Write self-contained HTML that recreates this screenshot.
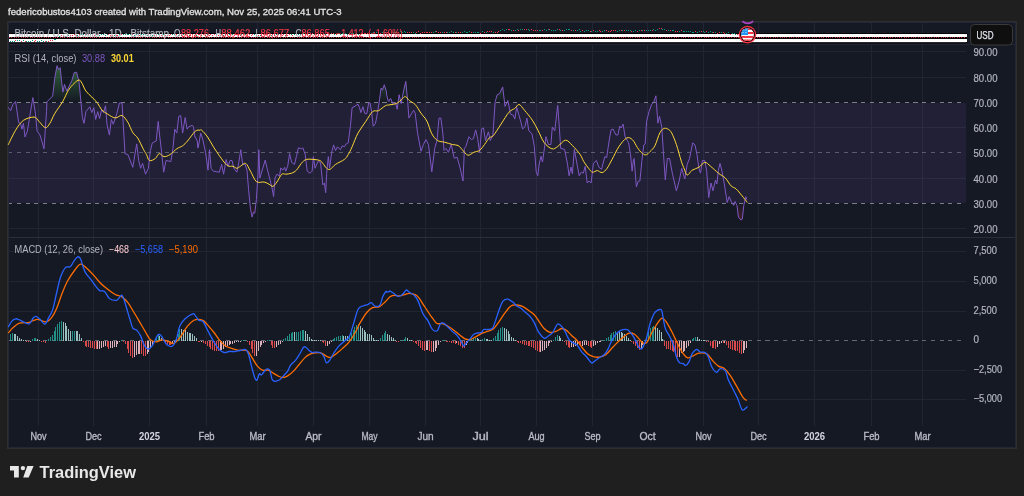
<!DOCTYPE html>
<html><head><meta charset="utf-8"><style>
html,body{margin:0;padding:0}
body{width:1024px;height:496px;background:#1f1f1f;position:relative;overflow:hidden;font-family:"Liberation Sans",sans-serif}
.t{position:absolute;white-space:nowrap;line-height:1;will-change:transform}
</style></head><body>
<svg width="1024" height="496" style="position:absolute;left:0;top:0;will-change:transform" font-family="Liberation Sans, sans-serif">
<defs><linearGradient id="gup" gradientUnits="userSpaceOnUse" x1="0" y1="26" x2="0" y2="102"><stop offset="0" stop-color="#4caf50" stop-opacity="1"/><stop offset="1" stop-color="#4caf50" stop-opacity="0"/></linearGradient><linearGradient id="gdn" gradientUnits="userSpaceOnUse" x1="0" y1="203" x2="0" y2="279"><stop offset="0" stop-color="#f23645" stop-opacity="0"/><stop offset="1" stop-color="#f23645" stop-opacity="1"/></linearGradient><clipPath id="plot"><rect x="9" y="23" width="957" height="403"/></clipPath><clipPath id="up70"><rect x="9" y="23" width="958" height="79"/></clipPath><clipPath id="dn30"><rect x="9" y="204" width="958" height="33"/></clipPath></defs>
<rect x="7" y="21" width="1010" height="428" fill="#2e2e2e"/>
<rect x="8" y="22" width="1008" height="426" fill="#232634"/>
<rect x="9" y="23" width="1006" height="424" fill="#151924"/>
<path d="M38.5 23V426 M93.5 23V426 M149.5 23V426 M206.5 23V426 M257.5 23V426 M313.5 23V426 M369.5 23V426 M425.5 23V426 M480.5 23V426 M536.5 23V426 M592.5 23V426 M647.5 23V426 M703.5 23V426 M758.5 23V426 M814.5 23V426 M871.5 23V426 M922.5 23V426 M9 51.5H966 M9 77.5H966 M9 127.5H966 M9 178.5H966 M9 228.5H966 M9 251.5H966 M9 281.5H966 M9 311.5H966 M9 370.5H966 M9 399.5H966" stroke="#212533" stroke-width="1" fill="none" shape-rendering="crispEdges"/>
<rect x="9" y="103" width="957" height="100" fill="#7e57c2" fill-opacity="0.12"/>
<path d="M9 237.5H1015" stroke="#2a2e39" stroke-width="1" shape-rendering="crispEdges"/>
<path d="M9 102.5H966" stroke="#b2b5be" stroke-opacity="0.65" stroke-width="1" stroke-dasharray="4.1 4.605" stroke-dashoffset="0.9" shape-rendering="crispEdges"/>
<path d="M9 152.5H966" stroke="#b2b5be" stroke-opacity="0.4" stroke-width="1" stroke-dasharray="4.1 4.605" stroke-dashoffset="0.9" shape-rendering="crispEdges"/>
<path d="M9 203.5H966" stroke="#b2b5be" stroke-opacity="0.65" stroke-width="1" stroke-dasharray="4.1 4.605" stroke-dashoffset="0.9" shape-rendering="crispEdges"/>
<path d="M9 340.5H966" stroke="#b2b5be" stroke-opacity="0.5" stroke-width="1" stroke-dasharray="4.1 4.605" stroke-dashoffset="0.9" shape-rendering="crispEdges"/>
<polygon points="8.2,102.5 8.2,107.3 10.7,110.7 12.7,104.8 15.6,101.5 18.6,122.4 20.5,123.4 21.9,129.2 23.4,123.4 25.0,137.0 27.3,131.2 29.3,119.5 32.8,97.6 35.2,111.6 37.1,131.2 40.0,135.0 44.0,148.8 46.5,111.6 46.9,101.9 52.7,96.0 54.7,78.4 57.0,65.7 58.6,69.6 60.2,67.7 61.7,82.3 62.9,92.1 64.5,84.3 66.8,91.1 71.9,80.4 74.2,72.6 76.6,72.2 79.1,82.3 81.1,103.8 82.4,117.5 84.0,123.4 85.9,111.6 89.8,106.8 91.8,112.6 93.8,107.7 95.7,119.5 97.7,111.6 99.6,118.5 101.6,109.7 103.5,112.6 105.5,105.8 107.0,124.3 109.4,135.1 111.3,119.5 113.3,124.3 116.8,113.6 119.5,102.9 122.0,102.9 124.0,137.0 125.0,153.6 127.9,154.6 132.8,167.3 136.7,143.9 138.7,160.5 140.6,168.3 142.6,163.4 145.5,174.2 148.4,168.3 150.4,150.7 152.3,142.9 156.2,141.0 158.2,121.4 159.8,137.0 161.0,146.8 163.7,172.2 166.0,160.5 170.9,161.5 172.9,148.8 174.8,129.2 176.8,133.1 178.7,116.5 180.7,115.5 182.6,133.1 185.2,117.5 187.1,129.2 189.0,126.3 190.0,126.3 192.0,125.3 193.4,126.3 193.5,127.3 194.9,137.0 195.3,137.0 197.3,141.0 197.8,147.8 198.2,147.8 200.7,133.1 202.7,139.0 205.6,152.7 208.0,170.2 209.5,149.7 211.1,168.3 213.4,171.2 219.3,172.2 221.6,164.4 223.6,174.2 226.1,159.5 228.1,166.3 230.0,160.5 232.0,160.5 233.9,168.3 236.9,172.2 238.8,162.4 240.8,149.7 242.7,164.4 245.1,164.4 247.0,170.2 248.6,189.8 250.5,209.3 252.1,217.1 253.5,212.2 254.8,213.2 256.4,199.5 258.0,174.2 258.8,149.7 259.9,178.0 261.3,173.2 265.2,160.1 267.1,168.3 269.1,176.1 272.0,187.8 273.6,196.6 275.0,178.0 276.9,174.2 279.5,176.1 280.8,167.9 282.8,170.2 284.7,167.3 285.7,171.2 287.7,166.3 289.6,153.6 291.6,162.4 294.5,164.4 296.4,156.6 298.4,147.8 301.3,148.8 302.9,147.8 305.2,154.6 307.2,171.2 310.1,173.2 312.1,171.2 313.4,156.6 315.0,168.3 317.9,161.5 320.5,162.4 322.8,184.9 324.4,183.0 325.7,192.7 326.7,173.2 328.3,156.6 329.6,168.3 331.6,152.7 333.6,144.9 335.5,150.7 337.5,146.8 340.4,149.7 342.3,145.8 344.3,146.8 346.2,143.9 348.2,142.9 350.5,125.3 352.1,107.7 355.0,106.2 358.0,104.2 359.5,107.7 360.9,112.6 362.9,106.8 364.8,113.6 366.8,113.6 368.7,102.9 370.1,102.9 371.6,111.6 373.2,126.3 375.5,123.4 377.5,112.6 379.5,99.9 381.0,88.2 382.0,88.8 382.4,90.2 384.3,84.7 384.3,84.9 386.3,91.1 386.8,95.7 388.2,100.9 388.8,101.5 390.0,98.9 390.7,98.6 392.7,103.5 395.6,102.5 397.2,109.3 399.1,94.7 401.1,103.5 403.8,89.8 405.8,81.4 407.7,101.5 408.9,118.1 411.2,114.2 413.6,110.3 415.2,113.2 417.5,132.8 421.0,151.3 423.4,144.5 425.9,139.6 428.4,144.5 431.8,171.8 434.7,148.4 437.0,140.6 439.0,118.1 440.9,118.1 442.9,133.8 444.0,150.4 446.0,148.4 448.4,152.3 451.3,144.5 454.2,158.2 457.1,157.2 460.1,167.9 463.0,181.0 464.4,148.4 465.9,146.5 468.9,136.7 471.4,139.6 473.4,138.6 475.7,129.9 477.7,138.6 479.6,152.3 481.6,128.9 483.5,127.9 485.5,140.6 488.4,131.8 490.3,140.6 492.9,134.7 495.2,101.5 497.2,94.7 499.5,93.7 502.7,86.9 505.0,106.4 507.9,100.6 510.5,114.2 513.2,115.2 514.8,119.1 516.7,107.4 518.7,114.2 520.6,121.1 522.6,128.9 524.9,126.9 526.9,118.1 528.8,130.8 532.0,133.8 534.3,146.5 536.2,171.8 537.8,175.8 539.2,164.0 541.1,156.2 542.5,162.1 546.0,136.7 548.4,144.5 550.9,144.5 552.3,126.9 554.8,130.8 557.7,105.4 559.3,126.9 560.7,148.4 564.6,149.4 567.5,164.0 569.1,175.8 571.0,167.0 572.4,173.8 574.3,149.4 576.3,160.1 579.2,175.8 581.3,172.2 583.3,173.2 585.2,166.3 587.2,183.0 589.1,181.0 591.1,183.0 593.4,163.4 596.4,160.5 598.9,167.3 601.6,169.3 604.8,156.6 606.7,157.6 608.1,147.8 609.1,141.0 611.0,130.0 613.0,129.0 615.9,134.9 617.9,134.9 619.8,126.1 621.2,128.0 623.1,124.1 625.1,136.8 628.6,142.7 630.5,154.4 632.1,171.2 633.5,159.3 634.1,158.5 636.4,186.9 638.4,181.0 639.9,181.0 641.9,160.5 643.8,144.9 645.2,143.9 646.6,121.2 649.1,111.4 651.6,104.6 653.6,102.6 655.9,95.8 657.9,123.2 659.5,116.3 661.8,127.1 663.4,152.5 665.3,180.0 667.3,158.5 669.6,158.5 672.5,174.2 676.4,190.8 679.4,180.0 681.7,168.3 684.8,179.0 687.2,164.4 689.5,158.5 691.1,150.7 692.7,142.9 695.0,144.9 697.0,154.6 698.9,168.3 700.5,173.2 702.4,160.5 704.8,160.5 706.7,171.2 708.7,197.6 711.0,183.0 713.0,190.8 715.5,180.0 716.9,183.9 718.4,170.2 720.0,163.4 722.0,171.2 724.3,183.9 727.2,202.5 729.2,196.6 731.7,202.5 733.7,205.4 735.0,201.5 737.0,205.4 738.4,217.1 740.9,220.0 742.3,219.1 743.8,205.4 745.8,196.6 746.8,199.5 746.8,102.5" fill="url(#gup)" clip-path="url(#up70)"/>
<polygon points="8.2,203.5 8.2,107.3 10.7,110.7 12.7,104.8 15.6,101.5 18.6,122.4 20.5,123.4 21.9,129.2 23.4,123.4 25.0,137.0 27.3,131.2 29.3,119.5 32.8,97.6 35.2,111.6 37.1,131.2 40.0,135.0 44.0,148.8 46.5,111.6 46.9,101.9 52.7,96.0 54.7,78.4 57.0,65.7 58.6,69.6 60.2,67.7 61.7,82.3 62.9,92.1 64.5,84.3 66.8,91.1 71.9,80.4 74.2,72.6 76.6,72.2 79.1,82.3 81.1,103.8 82.4,117.5 84.0,123.4 85.9,111.6 89.8,106.8 91.8,112.6 93.8,107.7 95.7,119.5 97.7,111.6 99.6,118.5 101.6,109.7 103.5,112.6 105.5,105.8 107.0,124.3 109.4,135.1 111.3,119.5 113.3,124.3 116.8,113.6 119.5,102.9 122.0,102.9 124.0,137.0 125.0,153.6 127.9,154.6 132.8,167.3 136.7,143.9 138.7,160.5 140.6,168.3 142.6,163.4 145.5,174.2 148.4,168.3 150.4,150.7 152.3,142.9 156.2,141.0 158.2,121.4 159.8,137.0 161.0,146.8 163.7,172.2 166.0,160.5 170.9,161.5 172.9,148.8 174.8,129.2 176.8,133.1 178.7,116.5 180.7,115.5 182.6,133.1 185.2,117.5 187.1,129.2 189.0,126.3 190.0,126.3 192.0,125.3 193.4,126.3 193.5,127.3 194.9,137.0 195.3,137.0 197.3,141.0 197.8,147.8 198.2,147.8 200.7,133.1 202.7,139.0 205.6,152.7 208.0,170.2 209.5,149.7 211.1,168.3 213.4,171.2 219.3,172.2 221.6,164.4 223.6,174.2 226.1,159.5 228.1,166.3 230.0,160.5 232.0,160.5 233.9,168.3 236.9,172.2 238.8,162.4 240.8,149.7 242.7,164.4 245.1,164.4 247.0,170.2 248.6,189.8 250.5,209.3 252.1,217.1 253.5,212.2 254.8,213.2 256.4,199.5 258.0,174.2 258.8,149.7 259.9,178.0 261.3,173.2 265.2,160.1 267.1,168.3 269.1,176.1 272.0,187.8 273.6,196.6 275.0,178.0 276.9,174.2 279.5,176.1 280.8,167.9 282.8,170.2 284.7,167.3 285.7,171.2 287.7,166.3 289.6,153.6 291.6,162.4 294.5,164.4 296.4,156.6 298.4,147.8 301.3,148.8 302.9,147.8 305.2,154.6 307.2,171.2 310.1,173.2 312.1,171.2 313.4,156.6 315.0,168.3 317.9,161.5 320.5,162.4 322.8,184.9 324.4,183.0 325.7,192.7 326.7,173.2 328.3,156.6 329.6,168.3 331.6,152.7 333.6,144.9 335.5,150.7 337.5,146.8 340.4,149.7 342.3,145.8 344.3,146.8 346.2,143.9 348.2,142.9 350.5,125.3 352.1,107.7 355.0,106.2 358.0,104.2 359.5,107.7 360.9,112.6 362.9,106.8 364.8,113.6 366.8,113.6 368.7,102.9 370.1,102.9 371.6,111.6 373.2,126.3 375.5,123.4 377.5,112.6 379.5,99.9 381.0,88.2 382.0,88.8 382.4,90.2 384.3,84.7 384.3,84.9 386.3,91.1 386.8,95.7 388.2,100.9 388.8,101.5 390.0,98.9 390.7,98.6 392.7,103.5 395.6,102.5 397.2,109.3 399.1,94.7 401.1,103.5 403.8,89.8 405.8,81.4 407.7,101.5 408.9,118.1 411.2,114.2 413.6,110.3 415.2,113.2 417.5,132.8 421.0,151.3 423.4,144.5 425.9,139.6 428.4,144.5 431.8,171.8 434.7,148.4 437.0,140.6 439.0,118.1 440.9,118.1 442.9,133.8 444.0,150.4 446.0,148.4 448.4,152.3 451.3,144.5 454.2,158.2 457.1,157.2 460.1,167.9 463.0,181.0 464.4,148.4 465.9,146.5 468.9,136.7 471.4,139.6 473.4,138.6 475.7,129.9 477.7,138.6 479.6,152.3 481.6,128.9 483.5,127.9 485.5,140.6 488.4,131.8 490.3,140.6 492.9,134.7 495.2,101.5 497.2,94.7 499.5,93.7 502.7,86.9 505.0,106.4 507.9,100.6 510.5,114.2 513.2,115.2 514.8,119.1 516.7,107.4 518.7,114.2 520.6,121.1 522.6,128.9 524.9,126.9 526.9,118.1 528.8,130.8 532.0,133.8 534.3,146.5 536.2,171.8 537.8,175.8 539.2,164.0 541.1,156.2 542.5,162.1 546.0,136.7 548.4,144.5 550.9,144.5 552.3,126.9 554.8,130.8 557.7,105.4 559.3,126.9 560.7,148.4 564.6,149.4 567.5,164.0 569.1,175.8 571.0,167.0 572.4,173.8 574.3,149.4 576.3,160.1 579.2,175.8 581.3,172.2 583.3,173.2 585.2,166.3 587.2,183.0 589.1,181.0 591.1,183.0 593.4,163.4 596.4,160.5 598.9,167.3 601.6,169.3 604.8,156.6 606.7,157.6 608.1,147.8 609.1,141.0 611.0,130.0 613.0,129.0 615.9,134.9 617.9,134.9 619.8,126.1 621.2,128.0 623.1,124.1 625.1,136.8 628.6,142.7 630.5,154.4 632.1,171.2 633.5,159.3 634.1,158.5 636.4,186.9 638.4,181.0 639.9,181.0 641.9,160.5 643.8,144.9 645.2,143.9 646.6,121.2 649.1,111.4 651.6,104.6 653.6,102.6 655.9,95.8 657.9,123.2 659.5,116.3 661.8,127.1 663.4,152.5 665.3,180.0 667.3,158.5 669.6,158.5 672.5,174.2 676.4,190.8 679.4,180.0 681.7,168.3 684.8,179.0 687.2,164.4 689.5,158.5 691.1,150.7 692.7,142.9 695.0,144.9 697.0,154.6 698.9,168.3 700.5,173.2 702.4,160.5 704.8,160.5 706.7,171.2 708.7,197.6 711.0,183.0 713.0,190.8 715.5,180.0 716.9,183.9 718.4,170.2 720.0,163.4 722.0,171.2 724.3,183.9 727.2,202.5 729.2,196.6 731.7,202.5 733.7,205.4 735.0,201.5 737.0,205.4 738.4,217.1 740.9,220.0 742.3,219.1 743.8,205.4 745.8,196.6 746.8,199.5 746.8,203.5" fill="url(#gdn)" clip-path="url(#dn30)"/>
<polyline points="8.2,107.3 10.7,110.7 12.7,104.8 15.6,101.5 18.6,122.4 20.5,123.4 21.9,129.2 23.4,123.4 25.0,137.0 27.3,131.2 29.3,119.5 32.8,97.6 35.2,111.6 37.1,131.2 40.0,135.0 44.0,148.8 46.5,111.6 46.9,101.9 52.7,96.0 54.7,78.4 57.0,65.7 58.6,69.6 60.2,67.7 61.7,82.3 62.9,92.1 64.5,84.3 66.8,91.1 71.9,80.4 74.2,72.6 76.6,72.2 79.1,82.3 81.1,103.8 82.4,117.5 84.0,123.4 85.9,111.6 89.8,106.8 91.8,112.6 93.8,107.7 95.7,119.5 97.7,111.6 99.6,118.5 101.6,109.7 103.5,112.6 105.5,105.8 107.0,124.3 109.4,135.1 111.3,119.5 113.3,124.3 116.8,113.6 119.5,102.9 122.0,102.9 124.0,137.0 125.0,153.6 127.9,154.6 132.8,167.3 136.7,143.9 138.7,160.5 140.6,168.3 142.6,163.4 145.5,174.2 148.4,168.3 150.4,150.7 152.3,142.9 156.2,141.0 158.2,121.4 159.8,137.0 161.0,146.8 163.7,172.2 166.0,160.5 170.9,161.5 172.9,148.8 174.8,129.2 176.8,133.1 178.7,116.5 180.7,115.5 182.6,133.1 185.2,117.5 187.1,129.2 189.0,126.3 190.0,126.3 192.0,125.3 193.4,126.3 193.5,127.3 194.9,137.0 195.3,137.0 197.3,141.0 197.8,147.8 198.2,147.8 200.7,133.1 202.7,139.0 205.6,152.7 208.0,170.2 209.5,149.7 211.1,168.3 213.4,171.2 219.3,172.2 221.6,164.4 223.6,174.2 226.1,159.5 228.1,166.3 230.0,160.5 232.0,160.5 233.9,168.3 236.9,172.2 238.8,162.4 240.8,149.7 242.7,164.4 245.1,164.4 247.0,170.2 248.6,189.8 250.5,209.3 252.1,217.1 253.5,212.2 254.8,213.2 256.4,199.5 258.0,174.2 258.8,149.7 259.9,178.0 261.3,173.2 265.2,160.1 267.1,168.3 269.1,176.1 272.0,187.8 273.6,196.6 275.0,178.0 276.9,174.2 279.5,176.1 280.8,167.9 282.8,170.2 284.7,167.3 285.7,171.2 287.7,166.3 289.6,153.6 291.6,162.4 294.5,164.4 296.4,156.6 298.4,147.8 301.3,148.8 302.9,147.8 305.2,154.6 307.2,171.2 310.1,173.2 312.1,171.2 313.4,156.6 315.0,168.3 317.9,161.5 320.5,162.4 322.8,184.9 324.4,183.0 325.7,192.7 326.7,173.2 328.3,156.6 329.6,168.3 331.6,152.7 333.6,144.9 335.5,150.7 337.5,146.8 340.4,149.7 342.3,145.8 344.3,146.8 346.2,143.9 348.2,142.9 350.5,125.3 352.1,107.7 355.0,106.2 358.0,104.2 359.5,107.7 360.9,112.6 362.9,106.8 364.8,113.6 366.8,113.6 368.7,102.9 370.1,102.9 371.6,111.6 373.2,126.3 375.5,123.4 377.5,112.6 379.5,99.9 381.0,88.2 382.0,88.8 382.4,90.2 384.3,84.7 384.3,84.9 386.3,91.1 386.8,95.7 388.2,100.9 388.8,101.5 390.0,98.9 390.7,98.6 392.7,103.5 395.6,102.5 397.2,109.3 399.1,94.7 401.1,103.5 403.8,89.8 405.8,81.4 407.7,101.5 408.9,118.1 411.2,114.2 413.6,110.3 415.2,113.2 417.5,132.8 421.0,151.3 423.4,144.5 425.9,139.6 428.4,144.5 431.8,171.8 434.7,148.4 437.0,140.6 439.0,118.1 440.9,118.1 442.9,133.8 444.0,150.4 446.0,148.4 448.4,152.3 451.3,144.5 454.2,158.2 457.1,157.2 460.1,167.9 463.0,181.0 464.4,148.4 465.9,146.5 468.9,136.7 471.4,139.6 473.4,138.6 475.7,129.9 477.7,138.6 479.6,152.3 481.6,128.9 483.5,127.9 485.5,140.6 488.4,131.8 490.3,140.6 492.9,134.7 495.2,101.5 497.2,94.7 499.5,93.7 502.7,86.9 505.0,106.4 507.9,100.6 510.5,114.2 513.2,115.2 514.8,119.1 516.7,107.4 518.7,114.2 520.6,121.1 522.6,128.9 524.9,126.9 526.9,118.1 528.8,130.8 532.0,133.8 534.3,146.5 536.2,171.8 537.8,175.8 539.2,164.0 541.1,156.2 542.5,162.1 546.0,136.7 548.4,144.5 550.9,144.5 552.3,126.9 554.8,130.8 557.7,105.4 559.3,126.9 560.7,148.4 564.6,149.4 567.5,164.0 569.1,175.8 571.0,167.0 572.4,173.8 574.3,149.4 576.3,160.1 579.2,175.8 581.3,172.2 583.3,173.2 585.2,166.3 587.2,183.0 589.1,181.0 591.1,183.0 593.4,163.4 596.4,160.5 598.9,167.3 601.6,169.3 604.8,156.6 606.7,157.6 608.1,147.8 609.1,141.0 611.0,130.0 613.0,129.0 615.9,134.9 617.9,134.9 619.8,126.1 621.2,128.0 623.1,124.1 625.1,136.8 628.6,142.7 630.5,154.4 632.1,171.2 633.5,159.3 634.1,158.5 636.4,186.9 638.4,181.0 639.9,181.0 641.9,160.5 643.8,144.9 645.2,143.9 646.6,121.2 649.1,111.4 651.6,104.6 653.6,102.6 655.9,95.8 657.9,123.2 659.5,116.3 661.8,127.1 663.4,152.5 665.3,180.0 667.3,158.5 669.6,158.5 672.5,174.2 676.4,190.8 679.4,180.0 681.7,168.3 684.8,179.0 687.2,164.4 689.5,158.5 691.1,150.7 692.7,142.9 695.0,144.9 697.0,154.6 698.9,168.3 700.5,173.2 702.4,160.5 704.8,160.5 706.7,171.2 708.7,197.6 711.0,183.0 713.0,190.8 715.5,180.0 716.9,183.9 718.4,170.2 720.0,163.4 722.0,171.2 724.3,183.9 727.2,202.5 729.2,196.6 731.7,202.5 733.7,205.4 735.0,201.5 737.0,205.4 738.4,217.1 740.9,220.0 742.3,219.1 743.8,205.4 745.8,196.6 746.8,199.5" fill="none" stroke="#7e57c2" stroke-width="1" stroke-linejoin="round"/>
<path d="M8.2,144.8C9.4,142.4 13.1,134.3 15.6,130.2C18.1,126.1 20.3,122.6 23.4,120.4C26.5,118.2 31.6,116.9 34.2,117.1C36.8,117.3 37.1,119.6 39.0,121.4C40.9,123.2 43.5,127.4 45.3,127.7C47.1,128.0 48.2,125.8 49.8,123.4C51.4,121.1 52.6,117.2 54.7,113.6C56.8,110.0 60.2,105.8 62.5,101.9C64.8,98.0 66.5,93.3 68.4,90.2C70.4,87.1 72.4,85.0 74.2,83.3C76.0,81.6 77.8,80.0 79.1,80.0C80.4,80.0 80.9,81.5 82.0,83.3C83.1,85.1 84.3,88.8 85.9,91.1C87.5,93.4 89.8,95.0 91.8,97.0C93.8,99.0 96.1,101.3 97.7,103.4C99.3,105.5 100.0,107.9 101.6,109.7C103.2,111.5 105.1,112.6 107.4,114.0C109.7,115.4 112.8,117.7 115.2,117.9C117.6,118.2 119.9,114.8 122.0,115.5C124.1,116.2 126.1,119.5 127.9,122.4C129.7,125.3 131.2,130.1 132.8,132.7C134.4,135.3 135.9,135.2 137.7,138.0C139.5,140.8 142.1,146.9 143.6,149.7C145.1,152.5 145.5,152.8 146.5,154.6C147.5,156.4 147.9,159.8 149.4,160.5C150.9,161.2 153.7,159.7 155.3,158.5C156.9,157.3 157.8,153.9 159.2,153.6C160.6,153.3 162.2,156.4 164.0,156.6C165.8,156.8 167.9,155.9 170.0,154.6C172.1,153.3 174.7,150.3 176.8,148.8C178.9,147.3 180.8,147.1 182.6,145.8C184.4,144.5 185.4,143.4 187.5,141.0C189.6,138.6 193.2,133.0 195.3,131.2C197.4,129.4 198.9,130.4 200.0,130.2C201.1,130.0 200.4,129.1 201.7,130.2C203.0,131.3 205.6,134.2 207.6,137.0C209.6,139.8 211.4,143.7 213.4,146.8C215.4,149.9 217.0,152.5 219.3,155.6C221.6,158.7 224.8,163.6 227.1,165.4C229.4,167.2 231.4,165.8 233.0,166.3C234.6,166.8 235.6,168.4 236.9,168.3C238.2,168.2 239.3,166.8 240.8,166.0C242.3,165.2 244.1,162.5 245.7,163.4C247.3,164.3 248.7,168.2 250.5,171.2C252.3,174.2 254.1,179.8 256.4,181.6C258.7,183.4 262.1,181.6 264.2,182.0C266.3,182.4 267.6,183.6 269.1,184.3C270.6,185.0 271.7,186.7 273.0,186.3C274.3,185.9 275.4,184.0 276.9,182.0C278.4,180.0 280.3,175.5 281.8,174.2C283.3,172.9 284.1,174.4 285.7,174.2C287.3,174.0 289.8,173.9 291.6,173.2C293.4,172.5 294.8,171.9 296.4,170.2C298.0,168.6 299.7,165.2 301.3,163.4C302.9,161.6 304.1,160.2 306.2,159.5C308.3,158.8 311.7,159.3 314.0,159.5C316.3,159.7 318.4,159.8 319.9,160.5C321.4,161.2 321.7,162.1 322.8,163.4C323.9,164.7 325.5,167.3 326.7,168.3C327.9,169.3 328.7,170.0 330.2,169.3C331.7,168.7 333.1,166.0 335.5,164.4C337.9,162.8 342.2,161.1 344.3,159.5C346.4,157.9 346.9,156.7 348.2,154.6C349.5,152.5 350.5,150.4 352.1,146.8C353.7,143.2 355.7,137.3 358.0,133.1C360.3,128.9 363.4,125.0 365.8,121.4C368.2,117.8 370.5,113.4 372.6,111.6C374.7,109.8 376.4,111.7 378.5,110.7C380.6,109.7 383.4,106.8 385.3,105.8C387.2,104.8 388.1,105.2 390.0,104.8C391.9,104.4 394.7,104.4 396.6,103.5C398.5,102.6 400.0,100.8 401.5,99.6C403.0,98.4 404.1,96.4 405.4,96.6C406.7,96.8 407.7,99.2 409.3,100.5C410.9,101.9 413.2,102.4 415.2,104.5C417.1,106.6 419.1,110.5 421.0,113.2C422.9,116.0 425.1,117.7 426.9,121.1C428.7,124.5 430.0,130.5 431.8,133.8C433.6,137.0 435.5,139.2 437.6,140.6C439.7,142.0 442.1,141.5 444.5,142.2C446.9,142.8 450.0,143.9 452.3,144.5C454.6,145.1 456.5,144.7 458.1,145.5C459.7,146.3 460.4,147.8 462.0,149.4C463.6,151.0 465.9,154.7 467.9,155.2C469.9,155.7 471.8,153.1 473.8,152.3C475.7,151.5 477.8,151.7 479.6,150.4C481.4,149.1 482.9,146.6 484.5,144.5C486.1,142.4 487.9,139.2 489.4,137.7C490.9,136.2 491.4,138.0 493.3,135.7C495.2,133.4 498.5,127.9 501.1,124.0C503.7,120.1 506.6,114.9 508.9,112.3C511.2,109.7 513.1,109.7 514.8,108.4C516.5,107.1 517.5,104.2 519.1,104.5C520.7,104.8 522.3,107.7 524.5,110.3C526.7,112.9 530.0,116.7 532.3,120.1C534.6,123.5 536.2,127.1 538.2,130.8C540.2,134.5 541.8,139.5 544.1,142.5C546.4,145.5 549.6,148.1 551.9,148.8C554.2,149.5 555.4,147.9 557.7,146.5C560.0,145.1 563.0,140.4 565.5,140.2C568.0,140.0 570.0,143.2 572.4,145.5C574.8,147.8 578.1,151.6 580.0,154.3C581.9,157.0 582.3,159.2 583.7,161.5C585.1,163.8 587.1,166.5 588.6,168.3C590.1,170.1 591.0,171.8 592.5,172.2C594.0,172.6 595.7,170.5 597.3,170.6C598.9,170.7 600.6,173.0 602.2,172.6C603.8,172.2 605.5,170.5 607.1,168.3C608.7,166.1 610.0,163.1 612.0,159.5C614.0,155.9 616.4,150.4 618.8,146.8C621.2,143.2 624.3,139.2 626.6,138.0C628.9,136.8 630.7,138.2 632.5,139.8C634.3,141.3 635.8,145.3 637.4,147.6C639.0,149.9 640.8,152.2 642.3,153.4C643.8,154.6 644.9,155.1 646.2,154.8C647.5,154.5 648.6,153.0 650.1,151.5C651.6,150.0 653.4,148.7 655.0,145.6C656.6,142.5 658.3,135.7 659.8,132.9C661.3,130.1 662.4,129.2 663.8,128.6C665.1,127.9 666.4,128.3 667.7,129.0C669.0,129.7 670.2,130.3 671.6,132.9C673.0,135.5 674.8,139.9 676.4,144.6C678.0,149.3 680.0,157.1 681.3,161.2C682.6,165.3 683.3,166.7 684.3,169.0C685.3,171.3 685.9,174.9 687.2,175.1C688.5,175.3 690.2,171.6 692.1,170.2C694.0,168.9 696.8,168.6 698.9,167.3C701.0,166.0 702.8,162.6 704.8,162.4C706.8,162.2 708.3,164.5 710.6,166.3C712.9,168.1 716.0,171.2 718.4,173.2C720.8,175.1 723.2,175.9 725.3,178.0C727.4,180.1 729.3,184.1 731.1,185.9C732.9,187.7 734.2,187.2 736.0,188.8C737.8,190.4 740.0,193.3 741.9,195.6C743.8,197.9 746.4,201.3 747.3,202.5" fill="none" stroke="#fdd835" stroke-width="1" stroke-linejoin="round"/>
<path d="M10.5 334v7M12.5 333v8M32.5 339v2M34.5 338v3M35.5 338v3M46.5 340v1M48.5 339v2M50.5 337v4M52.5 335v6M54.5 331v10M55.5 327v14M57.5 324v17M59.5 322v19M61.5 321v20M72.5 331v10M74.5 331v10M121.5 340v1M156.5 337v4M158.5 335v6M176.5 339v2M178.5 334v7M179.5 329v12M241.5 340v1M243.5 340v1M245.5 340v1M267.5 340v1M269.5 340v1M283.5 339v2M285.5 338v3M287.5 336v5M289.5 334v7M291.5 333v8M292.5 332v9M296.5 332v9M298.5 332v9M300.5 331v10M302.5 330v11M303.5 330v11M333.5 339v2M334.5 338v3M336.5 337v4M338.5 336v5M340.5 336v5M342.5 335v6M349.5 336v5M351.5 333v8M353.5 330v11M354.5 327v14M356.5 325v16M358.5 324v17M380.5 338v3M382.5 335v6M384.5 333v8M385.5 331v10M400.5 340v1M402.5 340v1M404.5 339v2M405.5 337v4M442.5 340v1M444.5 340v1M469.5 340v1M471.5 339v2M473.5 338v3M475.5 338v3M482.5 339v2M484.5 338v3M493.5 338v3M495.5 336v5M497.5 333v8M498.5 330v11M500.5 328v13M502.5 327v14M553.5 340v1M555.5 337v4M557.5 335v6M602.5 340v1M604.5 340v1M606.5 338v3M608.5 337v4M610.5 335v6M611.5 333v8M613.5 332v9M615.5 331v10M644.5 340v1M646.5 337v4M648.5 332v9M650.5 328v13M652.5 327v14M653.5 326v15M692.5 339v2M693.5 338v3M695.5 337v4" stroke="#26a69a" stroke-opacity="0.85" stroke-width="1" shape-rendering="crispEdges"/>
<path d="M14.5 334v7M15.5 334v7M17.5 336v5M19.5 338v3M21.5 339v2M23.5 340v1M25.5 340v1M37.5 339v2M39.5 340v1M63.5 322v19M65.5 323v18M66.5 326v15M68.5 329v12M70.5 331v10M76.5 331v10M77.5 331v10M79.5 334v7M81.5 338v3M159.5 336v5M161.5 338v3M163.5 340v1M181.5 329v12M183.5 330v11M185.5 330v11M187.5 332v9M189.5 333v8M190.5 333v8M192.5 334v7M194.5 336v5M196.5 338v3M294.5 332v9M305.5 331v10M307.5 334v7M309.5 337v4M311.5 339v2M312.5 340v1M314.5 340v1M316.5 340v1M318.5 340v1M320.5 340v1M343.5 336v5M345.5 336v5M347.5 336v5M360.5 326v15M362.5 328v13M364.5 330v11M365.5 332v9M367.5 334v7M369.5 334v7M371.5 335v6M373.5 338v3M374.5 340v1M376.5 340v1M378.5 340v1M387.5 334v7M389.5 335v6M391.5 337v4M393.5 338v3M395.5 340v1M407.5 338v3M409.5 340v1M411.5 340v1M477.5 338v3M478.5 339v2M480.5 340v1M486.5 339v2M487.5 339v2M489.5 340v1M491.5 340v1M504.5 328v13M506.5 329v12M508.5 331v10M509.5 334v7M511.5 337v4M513.5 338v3M515.5 340v1M559.5 336v5M560.5 338v3M562.5 340v1M617.5 332v9M619.5 332v9M621.5 332v9M622.5 333v8M624.5 334v7M626.5 336v5M628.5 338v3M630.5 340v1M655.5 327v14M657.5 328v13M659.5 330v11M661.5 332v9M662.5 339v2M697.5 337v4M699.5 339v2M701.5 340v1M703.5 340v1M704.5 340v1" stroke="#b2dfdb" stroke-opacity="0.85" stroke-width="1" shape-rendering="crispEdges"/>
<path d="M26.5 341v1M28.5 341v1M41.5 341v1M43.5 341v1M45.5 341v2M83.5 341v1M85.5 341v5M86.5 341v6M88.5 341v6M90.5 341v7M92.5 341v7M94.5 341v8M96.5 341v8M107.5 341v6M108.5 341v8M123.5 341v1M125.5 341v3M127.5 341v8M128.5 341v12M130.5 341v15M132.5 341v17M141.5 341v13M143.5 341v15M145.5 341v15M165.5 341v2M167.5 341v3M169.5 341v4M170.5 341v4M198.5 341v1M199.5 341v1M203.5 341v2M205.5 341v3M207.5 341v5M209.5 341v6M210.5 341v8M212.5 341v9M214.5 341v10M216.5 341v10M218.5 341v10M247.5 341v1M249.5 341v4M251.5 341v8M252.5 341v12M254.5 341v15M271.5 341v4M272.5 341v7M274.5 341v7M322.5 341v1M323.5 341v2M325.5 341v5M396.5 341v1M398.5 341v1M413.5 341v1M415.5 341v2M416.5 341v3M418.5 341v5M420.5 341v7M422.5 341v9M424.5 341v10M429.5 341v10M431.5 341v11M446.5 341v1M447.5 341v1M449.5 341v1M451.5 341v2M453.5 341v2M455.5 341v3M458.5 341v4M460.5 341v5M462.5 341v7M464.5 341v7M517.5 341v1M518.5 341v2M520.5 341v2M522.5 341v3M524.5 341v4M526.5 341v4M528.5 341v5M529.5 341v5M531.5 341v6M533.5 341v7M535.5 341v9M537.5 341v10M539.5 341v11M564.5 341v1M566.5 341v4M568.5 341v6M569.5 341v7M579.5 341v4M580.5 341v5M588.5 341v5M590.5 341v6M591.5 341v7M631.5 341v1M633.5 341v3M635.5 341v5M637.5 341v7M639.5 341v9M664.5 341v5M666.5 341v8M668.5 341v8M670.5 341v9M672.5 341v10M673.5 341v11M675.5 341v14M677.5 341v16M706.5 341v1M708.5 341v1M710.5 341v5M712.5 341v7M713.5 341v7M715.5 341v8M723.5 341v2M726.5 341v4M728.5 341v7M730.5 341v8M732.5 341v9M734.5 341v9M735.5 341v10M737.5 341v10M739.5 341v12M741.5 341v13" stroke="#ff5252" stroke-opacity="0.85" stroke-width="1" shape-rendering="crispEdges"/>
<path d="M30.5 341v1M97.5 341v8M99.5 341v8M101.5 341v7M103.5 341v6M105.5 341v5M110.5 341v7M112.5 341v7M114.5 341v6M116.5 341v6M117.5 341v3M119.5 341v1M134.5 341v16M136.5 341v14M138.5 341v13M139.5 341v13M147.5 341v13M148.5 341v11M150.5 341v7M152.5 341v4M154.5 341v1M172.5 341v2M174.5 341v1M201.5 341v1M220.5 341v9M221.5 341v9M223.5 341v8M225.5 341v6M227.5 341v5M229.5 341v4M230.5 341v3M232.5 341v3M234.5 341v2M236.5 341v1M238.5 341v1M240.5 341v1M256.5 341v15M258.5 341v10M260.5 341v6M261.5 341v4M263.5 341v2M265.5 341v1M276.5 341v6M278.5 341v4M280.5 341v3M282.5 341v1M327.5 341v5M329.5 341v3M331.5 341v1M426.5 341v9M427.5 341v9M433.5 341v11M435.5 341v10M436.5 341v7M438.5 341v4M440.5 341v1M456.5 341v2M466.5 341v4M467.5 341v2M540.5 341v11M542.5 341v10M544.5 341v9M546.5 341v7M548.5 341v5M549.5 341v2M551.5 341v1M571.5 341v6M573.5 341v6M575.5 341v5M577.5 341v4M582.5 341v5M584.5 341v4M586.5 341v4M593.5 341v5M595.5 341v4M597.5 341v2M599.5 341v1M600.5 341v1M641.5 341v7M642.5 341v4M679.5 341v16M681.5 341v12M683.5 341v11M684.5 341v10M686.5 341v7M688.5 341v5M690.5 341v2M717.5 341v6M719.5 341v3M721.5 341v2M724.5 341v2M743.5 341v12M744.5 341v9M746.5 341v7" stroke="#ffcdd2" stroke-opacity="0.85" stroke-width="1" shape-rendering="crispEdges"/>
<path d="M8.2,333.0C9.1,332.0 11.8,328.7 13.7,327.1C15.6,325.5 16.9,324.0 19.5,323.2C22.1,322.4 26.4,322.9 29.3,322.3C32.2,321.7 34.3,319.4 37.1,319.3C39.9,319.2 43.5,322.2 45.9,321.9C48.3,321.6 50.0,319.6 51.8,317.4C53.6,315.2 55.0,312.4 56.6,308.6C58.2,304.9 59.7,299.5 61.5,294.9C63.3,290.3 65.1,285.5 67.4,281.2C69.7,277.0 73.0,272.4 75.2,269.5C77.4,266.6 78.7,264.4 80.5,264.1C82.3,263.8 83.7,265.7 85.9,267.6C88.1,269.5 91.5,273.0 93.8,275.4C96.0,277.8 97.3,279.9 99.6,282.2C101.9,284.5 104.8,287.1 107.4,289.1C110.0,291.2 112.8,293.2 115.2,294.5C117.6,295.8 119.9,295.5 122.0,296.9C124.1,298.3 126.1,300.4 127.9,302.7C129.7,305.0 131.0,307.6 132.8,310.5C134.6,313.4 136.6,316.7 138.7,320.3C140.8,323.9 143.6,328.8 145.5,332.0C147.4,335.2 148.6,338.2 150.4,339.8C152.2,341.4 154.3,341.8 156.2,341.8C158.2,341.8 160.1,339.9 162.1,339.8C164.1,339.7 166.1,340.8 168.0,341.4C169.9,342.0 171.9,344.0 173.8,343.4C175.8,342.8 177.4,340.8 179.7,337.9C182.0,335.0 185.1,329.1 187.5,326.2C189.9,323.3 192.0,321.4 193.9,320.3C195.8,319.2 197.2,319.2 198.8,319.3C200.4,319.4 202.1,319.8 203.7,320.9C205.3,322.0 206.8,324.1 208.6,326.1C210.4,328.1 212.6,330.7 214.4,333.0C216.2,335.3 217.5,337.7 219.3,339.8C221.1,341.9 223.2,344.3 225.2,345.7C227.1,347.1 228.9,347.4 231.0,348.2C233.1,348.9 235.6,349.9 237.8,350.2C240.1,350.5 242.9,349.9 244.7,350.2C246.5,350.5 247.3,350.7 248.6,352.1C249.9,353.5 251.0,356.0 252.5,358.4C254.0,360.8 255.8,364.2 257.4,366.2C259.0,368.1 260.5,369.5 262.3,370.1C264.1,370.8 266.3,369.6 268.1,370.1C269.9,370.6 271.4,372.0 273.0,373.0C274.6,374.0 276.3,375.1 277.9,375.9C279.5,376.6 281.2,377.5 282.8,377.5C284.4,377.5 285.9,377.0 287.7,375.9C289.5,374.8 291.6,373.1 293.5,371.1C295.4,369.2 297.4,366.5 299.4,364.2C301.3,361.9 303.4,359.1 305.2,357.4C307.0,355.7 308.5,354.9 310.1,354.1C311.7,353.4 313.2,353.1 315.0,352.9C316.8,352.7 318.9,352.3 320.9,352.9C322.8,353.5 325.0,355.6 326.7,356.4C328.4,357.1 329.4,357.9 331.0,357.4C332.6,356.9 334.6,355.0 336.5,353.5C338.4,352.0 340.2,350.6 342.3,348.6C344.4,346.7 347.1,344.4 349.2,341.8C351.3,339.2 353.2,336.1 355.0,333.0C356.8,329.9 357.9,326.6 359.9,323.2C361.9,319.8 364.6,315.1 366.8,312.5C368.9,309.9 370.5,308.6 372.6,307.6C374.7,306.6 377.4,307.6 379.5,306.6C381.6,305.6 383.6,303.3 385.3,301.7C387.1,300.1 388.6,297.9 390.0,296.8C391.4,295.7 392.1,295.5 393.7,295.3C395.3,295.1 397.6,296.1 399.5,295.9C401.4,295.7 403.8,294.7 405.4,294.3C407.0,293.9 407.7,293.2 409.3,293.3C410.9,293.4 413.6,293.9 415.2,294.7C416.8,295.5 417.5,296.1 419.1,298.2C420.7,300.2 422.9,304.1 424.9,307.0C426.8,309.9 428.9,313.1 430.8,315.8C432.8,318.5 434.7,321.9 436.6,323.2C438.6,324.5 440.5,323.1 442.5,323.6C444.5,324.2 446.4,325.4 448.4,326.5C450.3,327.6 452.2,328.9 454.2,330.4C456.1,331.9 458.3,333.9 460.1,335.3C461.9,336.7 463.4,338.1 465.0,338.8C466.6,339.5 468.0,339.9 469.8,339.6C471.6,339.3 473.7,337.9 475.7,336.9C477.7,335.9 479.7,334.3 481.6,333.4C483.6,332.5 485.4,332.1 487.4,331.4C489.3,330.7 491.4,330.7 493.3,329.1C495.2,327.5 497.2,324.3 499.1,321.6C501.1,318.9 503.0,315.5 505.0,312.9C507.0,310.2 508.9,307.3 510.9,306.0C512.9,304.7 514.8,304.9 516.7,305.0C518.7,305.1 520.7,305.5 522.6,306.4C524.5,307.3 526.5,308.9 528.4,310.3C530.3,311.7 532.5,312.9 534.3,314.8C536.1,316.7 537.6,319.3 539.2,321.6C540.8,323.9 542.3,326.7 544.1,328.5C545.9,330.3 548.0,331.9 549.9,332.4C551.8,332.9 553.8,332.0 555.8,331.4C557.8,330.8 559.8,328.7 561.6,328.5C563.4,328.3 564.7,329.1 566.5,330.4C568.3,331.7 570.8,334.8 572.4,336.3C574.0,337.8 574.3,337.4 575.9,339.2C577.5,341.0 579.8,344.6 581.7,347.0C583.7,349.4 585.7,352.2 587.6,353.8C589.5,355.4 591.5,356.1 593.4,356.7C595.3,357.2 597.2,357.5 599.3,357.1C601.4,356.7 603.8,356.1 606.1,354.4C608.4,352.7 610.5,349.5 613.0,347.0C615.5,344.5 618.2,341.5 620.8,339.2C623.4,336.9 626.3,334.1 628.6,333.3C630.9,332.5 632.7,333.3 634.5,334.3C636.3,335.3 637.8,337.7 639.3,339.2C640.8,340.7 641.9,342.6 643.2,343.1C644.5,343.6 645.6,343.9 647.1,342.1C648.6,340.3 650.2,335.6 652.0,332.3C653.8,329.1 656.2,325.0 657.9,322.6C659.6,320.2 660.7,318.1 662.2,318.1C663.7,318.1 665.1,320.4 666.7,322.6C668.3,324.8 670.0,328.2 671.6,331.3C673.2,334.4 674.8,337.8 676.4,341.1C678.0,344.4 679.5,348.1 681.3,350.9C683.1,353.7 685.2,356.9 687.2,357.7C689.2,358.5 691.0,356.5 693.0,355.8C695.0,355.0 696.6,353.5 698.9,353.2C701.2,352.9 704.4,352.6 706.7,353.8C709.0,355.0 710.7,358.6 712.6,360.6C714.5,362.7 716.5,364.8 718.4,366.1C720.3,367.4 722.3,366.9 724.3,368.4C726.3,370.0 728.2,372.5 730.2,375.3C732.2,378.1 733.9,381.4 736.0,385.1C738.1,388.7 741.2,394.8 743.0,397.4C744.8,400.0 746.1,399.9 746.7,400.4" fill="none" stroke="#ff6d00" stroke-width="1.3" stroke-linejoin="round"/>
<path d="M8.2,327.1C8.8,326.1 10.5,322.7 11.7,321.3C12.9,319.9 14.3,319.0 15.6,318.8C16.9,318.5 18.2,319.4 19.5,319.9C20.8,320.4 21.8,321.2 23.4,321.9C25.0,322.5 27.7,324.4 29.3,323.8C30.9,323.2 32.1,319.2 33.2,318.0C34.3,316.8 35.0,316.2 36.1,316.4C37.2,316.6 38.5,318.0 40.0,319.3C41.5,320.6 43.4,324.5 44.9,324.2C46.4,323.9 47.5,319.8 48.8,317.4C50.1,315.0 51.4,313.7 52.7,309.6C54.0,305.5 55.3,298.4 56.6,293.0C57.9,287.6 59.0,281.5 60.5,277.3C62.0,273.1 63.8,269.4 65.4,267.6C67.0,265.8 68.8,267.8 70.3,266.6C71.8,265.5 73.0,262.3 74.2,260.7C75.4,259.1 76.7,257.1 77.7,256.8C78.8,256.5 79.6,257.2 80.5,258.8C81.4,260.4 82.1,264.2 83.0,266.6C83.9,269.0 84.6,271.3 85.9,273.4C87.2,275.5 89.2,277.2 90.8,279.3C92.4,281.4 94.2,284.2 95.7,286.1C97.2,288.0 98.1,289.7 99.6,290.6C101.1,291.5 102.9,290.1 104.5,291.4C106.1,292.7 107.5,296.9 109.4,298.4C111.4,299.9 114.6,300.5 116.2,300.4C117.8,300.3 118.1,298.8 119.1,297.9C120.1,297.0 121.0,294.5 122.0,295.3C123.0,296.1 123.7,298.7 125.0,302.7C126.3,306.7 128.6,315.1 129.9,319.3C131.2,323.5 131.7,326.3 132.8,328.1C133.9,329.9 135.4,328.8 136.7,330.1C138.0,331.4 139.3,333.3 140.6,335.9C141.9,338.5 143.2,343.4 144.5,345.6C145.8,347.8 147.1,349.0 148.4,349.0C149.7,349.0 151.0,347.5 152.3,345.6C153.6,343.7 155.2,339.7 156.2,337.8C157.3,335.9 157.6,334.5 158.6,334.3C159.6,334.1 160.9,335.2 162.1,336.8C163.3,338.4 164.5,342.1 166.0,343.7C167.5,345.3 169.6,346.5 170.9,346.6C172.2,346.8 172.8,346.1 173.8,344.6C174.8,343.1 175.8,340.9 176.8,337.8C177.7,334.7 178.4,329.3 179.7,326.2C181.0,323.1 182.4,321.4 184.6,319.3C186.8,317.2 191.0,314.3 192.9,313.8C194.8,313.3 194.9,315.3 195.9,316.4C196.9,317.5 197.7,319.5 198.8,320.3C199.9,321.1 201.6,320.3 202.7,321.2C203.8,322.2 204.5,324.0 205.6,326.1C206.7,328.2 208.0,331.1 209.5,333.9C211.0,336.7 212.8,340.1 214.4,342.7C216.0,345.3 217.7,348.0 219.3,349.6C220.9,351.2 222.6,352.2 224.2,352.5C225.8,352.8 227.3,351.7 229.1,351.5C230.9,351.3 233.1,351.7 234.9,351.5C236.7,351.3 238.0,350.8 239.8,350.5C241.6,350.2 244.2,348.9 245.7,349.6C247.2,350.3 247.6,351.7 248.6,354.5C249.6,357.3 250.5,362.5 251.5,366.2C252.5,369.9 253.6,374.6 254.5,376.9C255.4,379.2 256.0,380.7 256.8,380.2C257.6,379.7 258.6,374.9 259.3,374.0C260.1,373.1 260.6,375.3 261.3,375.0C262.1,374.7 262.9,373.0 263.8,372.0C264.7,371.0 265.6,369.4 266.6,369.1C267.6,368.8 268.8,368.5 269.7,370.1C270.6,371.7 271.2,377.0 272.0,378.9C272.8,380.8 273.6,380.9 274.4,381.2C275.2,381.5 276.0,381.0 276.9,380.8C277.8,380.6 278.7,380.6 279.8,379.8C280.9,379.0 282.1,377.3 283.4,375.9C284.7,374.4 286.5,372.9 287.7,371.1C288.9,369.3 289.3,367.0 290.6,365.2C291.9,363.4 294.0,362.1 295.5,360.3C297.0,358.5 298.1,356.6 299.4,354.5C300.7,352.4 302.3,348.9 303.3,347.6C304.3,346.4 304.6,346.5 305.6,347.0C306.6,347.5 308.0,349.6 309.1,350.5C310.2,351.4 311.1,352.2 312.1,352.5C313.1,352.8 313.7,352.1 315.0,352.1C316.3,352.1 318.4,351.8 319.9,352.5C321.4,353.2 322.7,354.7 323.8,356.4C324.9,358.1 325.3,362.0 326.3,362.7C327.3,363.4 328.4,361.8 329.6,360.3C330.8,358.8 332.1,355.8 333.6,353.5C335.1,351.2 336.6,348.7 338.4,346.6C340.2,344.6 342.5,342.8 344.3,341.2C346.1,339.6 347.7,339.6 349.2,336.9C350.7,334.2 351.6,329.8 353.1,325.2C354.6,320.6 356.4,312.7 358.0,309.5C359.6,306.3 361.3,306.8 362.9,306.0C364.5,305.2 366.3,305.2 367.7,304.6C369.1,304.1 370.1,302.5 371.2,302.7C372.4,302.9 373.2,305.5 374.6,306.0C376.0,306.5 378.2,307.0 379.5,305.6C380.8,304.2 381.8,299.4 382.4,297.8C383.0,296.2 382.3,297.3 382.9,296.2C383.5,295.2 385.3,292.1 385.9,291.4C386.5,290.7 385.6,292.0 386.3,292.0C387.0,292.0 389.2,291.6 389.8,291.4C390.4,291.2 389.4,290.7 390.0,291.0C390.6,291.3 392.4,292.4 393.7,293.3C395.0,294.2 396.3,295.9 397.6,296.2C398.9,296.6 400.4,296.0 401.5,295.3C402.6,294.6 403.6,293.2 404.4,292.3C405.2,291.4 405.6,290.0 406.4,290.0C407.2,290.0 408.0,291.4 409.3,292.3C410.6,293.2 412.7,293.8 414.2,295.3C415.7,296.8 416.6,298.0 418.1,301.1C419.6,304.2 421.4,310.5 423.0,313.8C424.6,317.1 426.4,318.2 427.9,320.7C429.3,323.1 430.6,326.8 431.8,328.5C432.9,330.2 433.7,330.7 434.7,331.0C435.7,331.3 436.6,331.6 437.6,330.4C438.6,329.2 439.5,324.8 440.5,323.6C441.5,322.4 442.4,322.7 443.5,323.2C444.6,323.7 445.9,325.1 447.4,326.5C448.9,327.9 450.7,329.9 452.3,331.4C453.9,332.9 455.5,333.4 457.1,335.3C458.7,337.2 460.9,341.3 462.0,343.1C463.1,344.9 463.2,346.3 464.0,346.1C464.8,345.9 465.9,343.2 466.9,342.1C467.9,341.0 468.7,340.5 469.8,339.2C470.9,337.9 472.4,335.3 473.8,334.3C475.1,333.3 476.4,333.3 477.7,333.0C479.0,332.7 480.6,333.0 481.6,332.4C482.6,331.8 482.5,330.0 483.5,329.5C484.5,329.0 485.9,329.7 487.4,329.5C488.9,329.3 491.0,329.8 492.3,328.5C493.6,327.2 494.1,324.7 495.2,321.6C496.3,318.5 497.8,313.3 499.1,309.9C500.4,306.5 501.5,302.9 503.0,301.1C504.5,299.3 506.3,299.0 507.9,299.2C509.5,299.4 511.3,301.0 512.8,302.1C514.3,303.2 515.4,305.0 516.7,306.0C518.0,307.0 519.3,307.1 520.6,308.0C521.9,308.9 522.9,310.0 524.5,311.5C526.1,313.0 528.8,314.9 530.4,316.8C532.0,318.7 533.0,320.2 534.3,322.6C535.6,325.0 536.6,328.8 538.2,331.4C539.8,334.0 542.5,337.4 544.1,338.2C545.7,339.0 546.5,337.3 548.0,336.3C549.5,335.3 551.2,334.4 552.9,332.4C554.5,330.3 556.1,324.8 557.7,324.0C559.3,323.2 561.3,326.1 562.6,327.5C563.9,328.9 564.4,330.3 565.5,332.4C566.6,334.5 568.1,338.4 569.5,340.2C570.8,342.0 572.7,342.6 573.4,343.1C574.1,343.6 573.2,342.8 573.9,343.1C574.5,343.4 576.6,344.6 577.3,345.1C577.9,345.6 577.1,344.9 577.8,346.0C578.5,347.1 580.4,350.2 581.7,351.9C583.0,353.5 584.3,354.3 585.6,355.8C586.9,357.2 588.5,359.4 589.5,360.6C590.5,361.8 590.9,363.0 591.9,363.0C592.9,363.0 594.2,361.5 595.4,360.6C596.6,359.7 597.8,358.7 599.3,357.7C600.8,356.7 602.7,356.3 604.2,354.8C605.7,353.3 606.8,351.3 608.1,348.9C609.4,346.4 610.7,342.5 612.0,340.1C613.3,337.7 614.4,335.9 615.9,334.3C617.4,332.7 619.2,331.2 620.8,330.4C622.4,329.6 624.4,329.4 625.7,329.4C627.0,329.4 627.5,329.4 628.6,330.4C629.7,331.4 631.2,333.3 632.5,335.2C633.8,337.2 635.3,340.0 636.4,342.1C637.5,344.2 638.3,347.0 639.3,348.0C640.3,349.0 641.1,349.5 642.3,348.0C643.4,346.5 644.9,343.3 646.2,339.2C647.5,335.1 648.8,327.7 650.1,323.5C651.4,319.3 652.9,315.9 654.0,313.8C655.1,311.7 655.9,311.5 656.9,310.8C657.9,310.1 659.0,309.5 659.8,309.5C660.6,309.5 661.1,308.8 661.8,310.8C662.5,312.8 663.1,318.5 663.8,321.6C664.4,324.7 664.7,327.0 665.7,329.4C666.7,331.8 668.3,333.6 669.6,336.2C670.9,338.8 672.4,341.6 673.5,345.0C674.6,348.4 675.4,353.8 676.4,356.7C677.4,359.6 678.2,361.5 679.4,362.6C680.5,363.8 682.3,363.1 683.3,363.6C684.3,364.1 684.6,365.8 685.6,365.5C686.6,365.2 688.0,363.6 689.1,361.6C690.2,359.7 690.9,355.9 692.1,353.8C693.4,351.8 695.3,349.6 696.6,349.3C697.9,349.0 698.5,351.3 699.9,351.9C701.3,352.4 703.4,351.6 704.8,352.4C706.2,353.2 707.2,354.3 708.3,356.7C709.4,359.1 710.2,363.9 711.6,366.5C713.0,369.1 715.1,372.0 716.5,372.4C717.9,372.8 718.7,368.9 720.2,368.7C721.7,368.4 724.0,369.1 725.4,370.9C726.8,372.7 726.8,376.3 728.3,379.7C729.8,383.1 732.6,388.3 734.2,391.5C735.8,394.7 736.5,395.8 737.9,398.9C739.2,402.0 740.7,408.6 742.3,409.9C743.9,411.2 746.6,407.1 747.5,406.5" fill="none" stroke="#2962ff" stroke-width="1.3" stroke-linejoin="round"/>
<rect x="9" y="33" width="958" height="10" fill="#000"/>
<rect x="9" y="42" width="957" height="1" fill="#2a2b30"/>
<rect x="9" y="43" width="957" height="1" fill="#0b0e16"/>
<rect x="9" y="44" width="1006" height="1" fill="#22252f"/>
<rect x="9" y="34" width="958" height="3" fill="#ffffff"/>
<rect x="9" y="39" width="958" height="3" fill="#ffffff"/>
<path d="M9 37.5H966" stroke="#f23645" stroke-opacity="0.8" stroke-width="1" stroke-dasharray="1 1.3" shape-rendering="crispEdges"/>
<path d="M10 41h1v1h-1zM12 41h1v1h-1zM14 41h1v1h-1zM17 40h1v1h-1zM19 40h1v1h-1zM23 40h1v1h-1zM26 41h1v1h-1zM28 41h1v1h-1zM30 41h1v1h-1zM32 40h1v1h-1zM37 41h1v1h-1zM39 41h1v1h-1zM41 40h1v1h-1zM43 41h1v1h-1zM46 41h1v1h-1zM54 39h1v1h-1zM55 39h1v1h-1zM59 36h1v1h-1zM65 36h1v1h-1zM68 35h1v1h-1zM77 35h1v1h-1zM81 34h1v1h-1zM83 34h1v1h-1zM86 34h1v1h-1zM90 34h1v1h-1zM96 34h1v1h-1zM99 35h1v1h-1zM101 34h1v1h-1zM103 34h1v1h-1zM105 35h1v1h-1zM107 34h1v1h-1zM114 35h1v1h-1zM119 34h1v1h-1zM123 34h1v1h-1zM125 34h1v1h-1zM127 34h1v1h-1zM128 34h1v1h-1zM130 34h1v1h-1zM134 35h1v1h-1zM136 34h1v1h-1zM138 34h1v1h-1zM141 34h1v1h-1zM143 34h1v1h-1zM145 34h1v1h-1zM147 35h1v1h-1zM150 35h1v1h-1zM152 35h1v1h-1zM158 34h1v1h-1zM163 34h1v1h-1zM172 34h1v1h-1zM174 34h1v1h-1zM178 35h1v1h-1zM181 35h1v1h-1zM183 34h1v1h-1zM185 34h1v1h-1zM189 35h1v1h-1zM196 35h1v1h-1zM201 35h1v1h-1zM205 35h1v1h-1zM207 34h1v1h-1zM216 34h1v1h-1zM223 35h1v1h-1zM225 34h1v1h-1zM229 34h1v1h-1zM232 34h1v1h-1zM240 35h1v1h-1zM241 34h1v1h-1zM245 34h1v1h-1zM254 34h1v1h-1zM260 35h1v1h-1zM271 35h1v1h-1zM274 35h1v1h-1zM276 34h1v1h-1zM278 34h1v1h-1zM285 35h1v1h-1zM291 34h1v1h-1zM294 34h1v1h-1zM296 34h1v1h-1zM298 34h1v1h-1zM300 34h1v1h-1zM302 34h1v1h-1zM303 33h1v1h-1zM311 34h1v1h-1zM314 34h1v1h-1zM318 35h1v1h-1zM323 33h1v1h-1zM325 34h1v1h-1zM334 34h1v1h-1zM338 33h1v1h-1zM340 34h1v1h-1zM342 33h1v1h-1zM343 33h1v1h-1zM345 33h1v1h-1zM347 34h1v1h-1zM349 33h1v1h-1zM351 33h1v1h-1zM353 33h1v1h-1zM356 33h1v1h-1zM358 34h1v1h-1zM360 34h1v1h-1zM371 33h1v1h-1zM373 32h1v1h-1zM376 32h1v1h-1zM382 32h1v1h-1zM384 32h1v1h-1zM385 32h1v1h-1zM393 32h1v1h-1zM395 32h1v1h-1zM400 31h1v1h-1zM402 32h1v1h-1zM404 31h1v1h-1zM405 32h1v1h-1zM413 32h1v1h-1zM415 33h1v1h-1zM433 32h1v1h-1zM435 31h1v1h-1zM442 32h1v1h-1zM447 32h1v1h-1zM449 32h1v1h-1zM451 31h1v1h-1zM453 32h1v1h-1zM456 32h1v1h-1zM462 32h1v1h-1zM464 31h1v1h-1zM466 32h1v1h-1zM467 32h1v1h-1zM469 31h1v1h-1zM473 32h1v1h-1zM475 32h1v1h-1zM477 32h1v1h-1zM478 32h1v1h-1zM482 31h1v1h-1zM486 32h1v1h-1zM493 32h1v1h-1zM500 30h1v1h-1zM502 29h1v1h-1zM504 30h1v1h-1zM506 29h1v1h-1zM511 30h1v1h-1zM515 30h1v1h-1zM517 29h1v1h-1zM520 29h1v1h-1zM522 29h1v1h-1zM528 29h1v1h-1zM529 30h1v1h-1zM539 30h1v1h-1zM540 30h1v1h-1zM544 29h1v1h-1zM546 30h1v1h-1zM548 29h1v1h-1zM551 30h1v1h-1zM553 30h1v1h-1zM555 30h1v1h-1zM557 29h1v1h-1zM560 30h1v1h-1zM564 30h1v1h-1zM566 29h1v1h-1zM568 29h1v1h-1zM569 29h1v1h-1zM573 30h1v1h-1zM577 30h1v1h-1zM579 29h1v1h-1zM580 31h1v1h-1zM584 31h1v1h-1zM586 30h1v1h-1zM588 30h1v1h-1zM591 31h1v1h-1zM595 31h1v1h-1zM597 31h1v1h-1zM602 31h1v1h-1zM604 30h1v1h-1zM617 31h1v1h-1zM619 30h1v1h-1zM622 30h1v1h-1zM626 30h1v1h-1zM628 30h1v1h-1zM630 30h1v1h-1zM633 31h1v1h-1zM635 30h1v1h-1zM639 30h1v1h-1zM642 30h1v1h-1zM646 30h1v1h-1zM648 30h1v1h-1zM650 30h1v1h-1zM653 29h1v1h-1zM655 30h1v1h-1zM657 29h1v1h-1zM662 29h1v1h-1zM664 29h1v1h-1zM668 30h1v1h-1zM672 30h1v1h-1zM673 30h1v1h-1zM679 31h1v1h-1zM683 31h1v1h-1zM684 31h1v1h-1zM686 31h1v1h-1zM688 31h1v1h-1zM690 31h1v1h-1zM692 32h1v1h-1zM693 32h1v1h-1zM697 32h1v1h-1zM699 31h1v1h-1zM703 31h1v1h-1zM704 32h1v1h-1zM708 32h1v1h-1zM710 31h1v1h-1zM712 32h1v1h-1zM715 32h1v1h-1zM721 32h1v1h-1zM726 33h1v1h-1zM728 32h1v1h-1zM732 33h1v1h-1zM734 33h1v1h-1zM735 34h1v1h-1zM741 34h1v1h-1zM743 34h1v1h-1zM744 35h1v1h-1z" fill="#089981"/>
<path d="M15 40h1v1h-1zM21 41h1v1h-1zM25 41h1v1h-1zM34 41h1v1h-1zM35 40h1v1h-1zM45 41h1v1h-1zM48 41h1v1h-1zM50 40h1v1h-1zM52 40h1v1h-1zM57 37h1v1h-1zM61 35h1v1h-1zM63 36h1v1h-1zM66 36h1v1h-1zM70 35h1v1h-1zM72 35h1v1h-1zM74 34h1v1h-1zM76 35h1v1h-1zM79 34h1v1h-1zM85 34h1v1h-1zM88 34h1v1h-1zM92 35h1v1h-1zM94 35h1v1h-1zM97 34h1v1h-1zM108 34h1v1h-1zM110 35h1v1h-1zM112 35h1v1h-1zM116 35h1v1h-1zM117 35h1v1h-1zM121 34h1v1h-1zM132 34h1v1h-1zM139 35h1v1h-1zM148 34h1v1h-1zM154 35h1v1h-1zM156 35h1v1h-1zM159 34h1v1h-1zM161 35h1v1h-1zM165 35h1v1h-1zM167 35h1v1h-1zM169 35h1v1h-1zM170 34h1v1h-1zM176 34h1v1h-1zM179 35h1v1h-1zM187 35h1v1h-1zM190 35h1v1h-1zM192 34h1v1h-1zM194 35h1v1h-1zM198 34h1v1h-1zM199 34h1v1h-1zM203 34h1v1h-1zM209 35h1v1h-1zM210 34h1v1h-1zM212 35h1v1h-1zM214 34h1v1h-1zM218 35h1v1h-1zM220 35h1v1h-1zM221 34h1v1h-1zM227 34h1v1h-1zM230 34h1v1h-1zM234 35h1v1h-1zM236 34h1v1h-1zM238 35h1v1h-1zM243 34h1v1h-1zM247 35h1v1h-1zM249 34h1v1h-1zM251 35h1v1h-1zM252 34h1v1h-1zM256 35h1v1h-1zM258 35h1v1h-1zM261 35h1v1h-1zM263 34h1v1h-1zM265 34h1v1h-1zM267 34h1v1h-1zM269 35h1v1h-1zM272 34h1v1h-1zM280 34h1v1h-1zM282 35h1v1h-1zM283 34h1v1h-1zM287 35h1v1h-1zM289 34h1v1h-1zM292 35h1v1h-1zM305 34h1v1h-1zM307 34h1v1h-1zM309 35h1v1h-1zM312 33h1v1h-1zM316 34h1v1h-1zM320 34h1v1h-1zM322 34h1v1h-1zM327 33h1v1h-1zM329 34h1v1h-1zM331 33h1v1h-1zM333 33h1v1h-1zM336 34h1v1h-1zM354 34h1v1h-1zM362 33h1v1h-1zM364 33h1v1h-1zM365 33h1v1h-1zM367 33h1v1h-1zM369 33h1v1h-1zM374 32h1v1h-1zM378 32h1v1h-1zM380 33h1v1h-1zM387 32h1v1h-1zM389 33h1v1h-1zM391 32h1v1h-1zM396 32h1v1h-1zM398 32h1v1h-1zM407 32h1v1h-1zM409 32h1v1h-1zM411 32h1v1h-1zM416 32h1v1h-1zM418 31h1v1h-1zM420 33h1v1h-1zM422 32h1v1h-1zM424 32h1v1h-1zM426 32h1v1h-1zM427 32h1v1h-1zM429 32h1v1h-1zM431 32h1v1h-1zM436 31h1v1h-1zM438 32h1v1h-1zM440 32h1v1h-1zM444 32h1v1h-1zM446 32h1v1h-1zM455 32h1v1h-1zM458 32h1v1h-1zM460 32h1v1h-1zM471 32h1v1h-1zM480 33h1v1h-1zM484 32h1v1h-1zM487 31h1v1h-1zM489 31h1v1h-1zM491 31h1v1h-1zM495 32h1v1h-1zM497 32h1v1h-1zM498 31h1v1h-1zM508 29h1v1h-1zM509 29h1v1h-1zM513 30h1v1h-1zM518 30h1v1h-1zM524 29h1v1h-1zM526 29h1v1h-1zM531 29h1v1h-1zM533 30h1v1h-1zM535 30h1v1h-1zM537 30h1v1h-1zM542 30h1v1h-1zM549 29h1v1h-1zM559 29h1v1h-1zM562 30h1v1h-1zM571 30h1v1h-1zM575 30h1v1h-1zM582 30h1v1h-1zM590 31h1v1h-1zM593 30h1v1h-1zM599 30h1v1h-1zM600 31h1v1h-1zM606 30h1v1h-1zM608 31h1v1h-1zM610 31h1v1h-1zM611 30h1v1h-1zM613 30h1v1h-1zM615 30h1v1h-1zM621 30h1v1h-1zM624 30h1v1h-1zM631 31h1v1h-1zM637 31h1v1h-1zM641 30h1v1h-1zM644 30h1v1h-1zM652 30h1v1h-1zM659 28h1v1h-1zM661 28h1v1h-1zM666 30h1v1h-1zM670 30h1v1h-1zM675 31h1v1h-1zM677 31h1v1h-1zM681 30h1v1h-1zM695 31h1v1h-1zM701 31h1v1h-1zM706 31h1v1h-1zM713 32h1v1h-1zM717 33h1v1h-1zM719 32h1v1h-1zM723 32h1v1h-1zM724 33h1v1h-1zM730 34h1v1h-1zM737 34h1v1h-1zM739 34h1v1h-1zM746 34h1v1h-1z" fill="#f23645"/>
<clipPath id="arcclip"><rect x="730" y="21" width="40" height="10"/></clipPath>
<path d="M742.3 21.2Q747.8 25.6 753.2 21.2" fill="none" stroke="#a845c0" stroke-width="1.8"/>
<circle cx="747.5" cy="34.6" r="8.8" fill="#f23645"/>
<circle cx="747.5" cy="34.6" r="7.4" fill="#000"/>
<clipPath id="flagclip"><circle cx="747.5" cy="34.6" r="6.4"/></clipPath>
<g clip-path="url(#flagclip)"><rect x="741" y="28" width="13" height="13" fill="#ffffff"/><rect x="741" y="28" width="13" height="2" fill="#f23645"/><rect x="741" y="32" width="13" height="2" fill="#f23645"/><rect x="741" y="36" width="13" height="2" fill="#f23645"/><rect x="741" y="39.5" width="13" height="2" fill="#f23645"/><rect x="741" y="28" width="7" height="7" fill="#2196f3"/></g>
<path d="M742.5 30h1M745.5 30h1M742.5 32.5h1M745.5 32.5h1" stroke="#fff" stroke-width="1" opacity="0.8"/>
<text x="14.5" y="36.5" font-size="10.2" fill="#b2b5be" font-weight="normal" text-anchor="start" textLength="154.5" lengthAdjust="spacingAndGlyphs" stroke="#b2b5be" stroke-width="0.15">Bitcoin / U.S. Dollar · 1D · Bitstamp</text>
<text x="174" y="36.5" font-size="10.2" fill="#b2b5be" font-weight="normal" text-anchor="start" textLength="6.5" lengthAdjust="spacingAndGlyphs" stroke="#b2b5be" stroke-width="0.15">O</text>
<text x="181" y="36.5" font-size="10.2" fill="#f23645" font-weight="normal" text-anchor="start" textLength="28" lengthAdjust="spacingAndGlyphs" stroke="#f23645" stroke-width="0.15">88,276</text>
<text x="215.5" y="36.5" font-size="10.2" fill="#b2b5be" font-weight="normal" text-anchor="start" textLength="5.5" lengthAdjust="spacingAndGlyphs" stroke="#b2b5be" stroke-width="0.15">H</text>
<text x="221.3" y="36.5" font-size="10.2" fill="#f23645" font-weight="normal" text-anchor="start" textLength="29" lengthAdjust="spacingAndGlyphs" stroke="#f23645" stroke-width="0.15">88,462</text>
<text x="255.5" y="36.5" font-size="10.2" fill="#b2b5be" font-weight="normal" text-anchor="start" textLength="4" lengthAdjust="spacingAndGlyphs" stroke="#b2b5be" stroke-width="0.15">L</text>
<text x="260.4" y="36.5" font-size="10.2" fill="#f23645" font-weight="normal" text-anchor="start" textLength="29" lengthAdjust="spacingAndGlyphs" stroke="#f23645" stroke-width="0.15">86,677</text>
<text x="295.5" y="36.5" font-size="10.2" fill="#b2b5be" font-weight="normal" text-anchor="start" textLength="6" lengthAdjust="spacingAndGlyphs" stroke="#b2b5be" stroke-width="0.15">C</text>
<text x="301.4" y="36.5" font-size="10.2" fill="#f23645" font-weight="normal" text-anchor="start" textLength="28.5" lengthAdjust="spacingAndGlyphs" stroke="#f23645" stroke-width="0.15">86,865</text>
<text x="336" y="36.5" font-size="10.2" fill="#f23645" font-weight="normal" text-anchor="start" textLength="27.5" lengthAdjust="spacingAndGlyphs" stroke="#f23645" stroke-width="0.15">−1,412</text>
<text x="368.2" y="36.5" font-size="10.2" fill="#f23645" font-weight="normal" text-anchor="start" textLength="34.5" lengthAdjust="spacingAndGlyphs" stroke="#f23645" stroke-width="0.15">(−1.60%)</text>
<text x="14.5" y="62" font-size="10" fill="#b2b5be" font-weight="normal" text-anchor="start" textLength="62" lengthAdjust="spacingAndGlyphs" >RSI (14, close)</text>
<text x="82" y="62" font-size="10" fill="#7e57c2" font-weight="normal" text-anchor="start" textLength="23" lengthAdjust="spacingAndGlyphs" >30.88</text>
<text x="111" y="62" font-size="10" fill="#fdd835" font-weight="bold" text-anchor="start" textLength="22.7" lengthAdjust="spacingAndGlyphs" >30.01</text>
<text x="14.5" y="252.9" font-size="10" fill="#b2b5be" font-weight="normal" text-anchor="start" textLength="88.5" lengthAdjust="spacingAndGlyphs" >MACD (12, 26, close)</text>
<text x="109" y="252.9" font-size="10" fill="#ffcdd2" font-weight="normal" text-anchor="start" textLength="20" lengthAdjust="spacingAndGlyphs" >−468</text>
<text x="135" y="252.9" font-size="10" fill="#2962ff" font-weight="normal" text-anchor="start" textLength="28" lengthAdjust="spacingAndGlyphs" >−5,658</text>
<text x="169" y="252.9" font-size="10" fill="#ff6d00" font-weight="normal" text-anchor="start" textLength="29" lengthAdjust="spacingAndGlyphs" >−5,190</text>
<text x="973.5" y="55.6" font-size="10.4" fill="#b2b5be" font-weight="normal" text-anchor="start" textLength="24" lengthAdjust="spacingAndGlyphs" stroke="#b2b5be" stroke-width="0.2">90.00</text>
<text x="973.5" y="81.6" font-size="10.4" fill="#b2b5be" font-weight="normal" text-anchor="start" textLength="24" lengthAdjust="spacingAndGlyphs" stroke="#b2b5be" stroke-width="0.2">80.00</text>
<text x="973.5" y="106.6" font-size="10.4" fill="#b2b5be" font-weight="normal" text-anchor="start" textLength="24" lengthAdjust="spacingAndGlyphs" stroke="#b2b5be" stroke-width="0.2">70.00</text>
<text x="973.5" y="131.6" font-size="10.4" fill="#b2b5be" font-weight="normal" text-anchor="start" textLength="24" lengthAdjust="spacingAndGlyphs" stroke="#b2b5be" stroke-width="0.2">60.00</text>
<text x="973.5" y="156.6" font-size="10.4" fill="#b2b5be" font-weight="normal" text-anchor="start" textLength="24" lengthAdjust="spacingAndGlyphs" stroke="#b2b5be" stroke-width="0.2">50.00</text>
<text x="973.5" y="182.6" font-size="10.4" fill="#b2b5be" font-weight="normal" text-anchor="start" textLength="24" lengthAdjust="spacingAndGlyphs" stroke="#b2b5be" stroke-width="0.2">40.00</text>
<text x="973.5" y="207.6" font-size="10.4" fill="#b2b5be" font-weight="normal" text-anchor="start" textLength="24" lengthAdjust="spacingAndGlyphs" stroke="#b2b5be" stroke-width="0.2">30.00</text>
<text x="973.5" y="232.6" font-size="10.4" fill="#b2b5be" font-weight="normal" text-anchor="start" textLength="24" lengthAdjust="spacingAndGlyphs" stroke="#b2b5be" stroke-width="0.2">20.00</text>
<text x="973.5" y="254.2" font-size="10.4" fill="#b2b5be" font-weight="normal" text-anchor="start" textLength="23.5" lengthAdjust="spacingAndGlyphs" stroke="#b2b5be" stroke-width="0.2">7,500</text>
<text x="973.5" y="284.2" font-size="10.4" fill="#b2b5be" font-weight="normal" text-anchor="start" textLength="23.5" lengthAdjust="spacingAndGlyphs" stroke="#b2b5be" stroke-width="0.2">5,000</text>
<text x="973.5" y="314.2" font-size="10.4" fill="#b2b5be" font-weight="normal" text-anchor="start" textLength="23.5" lengthAdjust="spacingAndGlyphs" stroke="#b2b5be" stroke-width="0.2">2,500</text>
<text x="973.5" y="343.2" font-size="10.4" fill="#b2b5be" font-weight="normal" text-anchor="start" textLength="5.5" lengthAdjust="spacingAndGlyphs" stroke="#b2b5be" stroke-width="0.2">0</text>
<text x="973.5" y="373.2" font-size="10.4" fill="#b2b5be" font-weight="normal" text-anchor="start" textLength="28.7" lengthAdjust="spacingAndGlyphs" stroke="#b2b5be" stroke-width="0.2">−2,500</text>
<text x="973.5" y="402.2" font-size="10.4" fill="#b2b5be" font-weight="normal" text-anchor="start" textLength="28.7" lengthAdjust="spacingAndGlyphs" stroke="#b2b5be" stroke-width="0.2">−5,000</text>
<text x="38.5" y="440" font-size="10.4" fill="#b8bbc3" font-weight="normal" text-anchor="middle" textLength="16.2" lengthAdjust="spacingAndGlyphs" stroke="#b8bbc3" stroke-width="0.35">Nov</text>
<text x="93.5" y="440" font-size="10.4" fill="#b8bbc3" font-weight="normal" text-anchor="middle" textLength="16.2" lengthAdjust="spacingAndGlyphs" stroke="#b8bbc3" stroke-width="0.35">Dec</text>
<text x="149.5" y="440" font-size="10.4" fill="#d1d4dc" font-weight="bold" text-anchor="middle" textLength="21.2" lengthAdjust="spacingAndGlyphs" >2025</text>
<text x="206.5" y="440" font-size="10.4" fill="#b8bbc3" font-weight="normal" text-anchor="middle" textLength="16.2" lengthAdjust="spacingAndGlyphs" stroke="#b8bbc3" stroke-width="0.35">Feb</text>
<text x="257.5" y="440" font-size="10.4" fill="#b8bbc3" font-weight="normal" text-anchor="middle" textLength="16.2" lengthAdjust="spacingAndGlyphs" stroke="#b8bbc3" stroke-width="0.35">Mar</text>
<text x="313.5" y="440" font-size="10.4" fill="#b8bbc3" font-weight="normal" text-anchor="middle" textLength="16.2" lengthAdjust="spacingAndGlyphs" stroke="#b8bbc3" stroke-width="0.35">Apr</text>
<text x="369.5" y="440" font-size="10.4" fill="#b8bbc3" font-weight="normal" text-anchor="middle" textLength="16.2" lengthAdjust="spacingAndGlyphs" stroke="#b8bbc3" stroke-width="0.35">May</text>
<text x="425.5" y="440" font-size="10.4" fill="#b8bbc3" font-weight="normal" text-anchor="middle" textLength="16.2" lengthAdjust="spacingAndGlyphs" stroke="#b8bbc3" stroke-width="0.35">Jun</text>
<text x="480.5" y="440" font-size="10.4" fill="#b8bbc3" font-weight="normal" text-anchor="middle" textLength="16.2" lengthAdjust="spacingAndGlyphs" stroke="#b8bbc3" stroke-width="0.35">Jul</text>
<text x="536.5" y="440" font-size="10.4" fill="#b8bbc3" font-weight="normal" text-anchor="middle" textLength="16.2" lengthAdjust="spacingAndGlyphs" stroke="#b8bbc3" stroke-width="0.35">Aug</text>
<text x="592.5" y="440" font-size="10.4" fill="#b8bbc3" font-weight="normal" text-anchor="middle" textLength="16.2" lengthAdjust="spacingAndGlyphs" stroke="#b8bbc3" stroke-width="0.35">Sep</text>
<text x="647.5" y="440" font-size="10.4" fill="#b8bbc3" font-weight="normal" text-anchor="middle" textLength="16.2" lengthAdjust="spacingAndGlyphs" stroke="#b8bbc3" stroke-width="0.35">Oct</text>
<text x="703.5" y="440" font-size="10.4" fill="#b8bbc3" font-weight="normal" text-anchor="middle" textLength="16.2" lengthAdjust="spacingAndGlyphs" stroke="#b8bbc3" stroke-width="0.35">Nov</text>
<text x="758.5" y="440" font-size="10.4" fill="#b8bbc3" font-weight="normal" text-anchor="middle" textLength="16.2" lengthAdjust="spacingAndGlyphs" stroke="#b8bbc3" stroke-width="0.35">Dec</text>
<text x="814.5" y="440" font-size="10.4" fill="#d1d4dc" font-weight="bold" text-anchor="middle" textLength="21.2" lengthAdjust="spacingAndGlyphs" >2026</text>
<text x="871.5" y="440" font-size="10.4" fill="#b8bbc3" font-weight="normal" text-anchor="middle" textLength="16.2" lengthAdjust="spacingAndGlyphs" stroke="#b8bbc3" stroke-width="0.35">Feb</text>
<text x="922.5" y="440" font-size="10.4" fill="#b8bbc3" font-weight="normal" text-anchor="middle" textLength="16.2" lengthAdjust="spacingAndGlyphs" stroke="#b8bbc3" stroke-width="0.35">Mar</text>
<rect x="970.5" y="24.5" width="42" height="20.5" rx="4" fill="#0f0f0f" stroke="#3a3a3a" stroke-width="1"/>
<text x="976.5" y="39" font-size="10" fill="#e0e3eb" font-weight="normal" text-anchor="start" textLength="17" lengthAdjust="spacingAndGlyphs" stroke="#e0e3eb" stroke-width="0.25">USD</text>
<path d="M10 466H18.8V477.4H14V470.4H10Z" fill="#e8e8e8"/>
<circle cx="22.9" cy="468.1" r="2.2" fill="#e8e8e8"/>
<path d="M27.3 466H33.6L28.7 477.4H23.2Z" fill="#e8e8e8"/>
<text x="39.5" y="478" font-size="17" fill="#e8e8e8" font-weight="bold" text-anchor="start" textLength="96.5" lengthAdjust="spacingAndGlyphs" >TradingView</text>
</svg>
<div class="t" style="left:8px;top:7px;font-size:9.6px;color:#e3e3e3;-webkit-text-stroke:0.3px #e3e3e3">federicobustos4103 created with TradingView.com, Nov 25, 2025 06:41 UTC-3</div>
</body></html>
